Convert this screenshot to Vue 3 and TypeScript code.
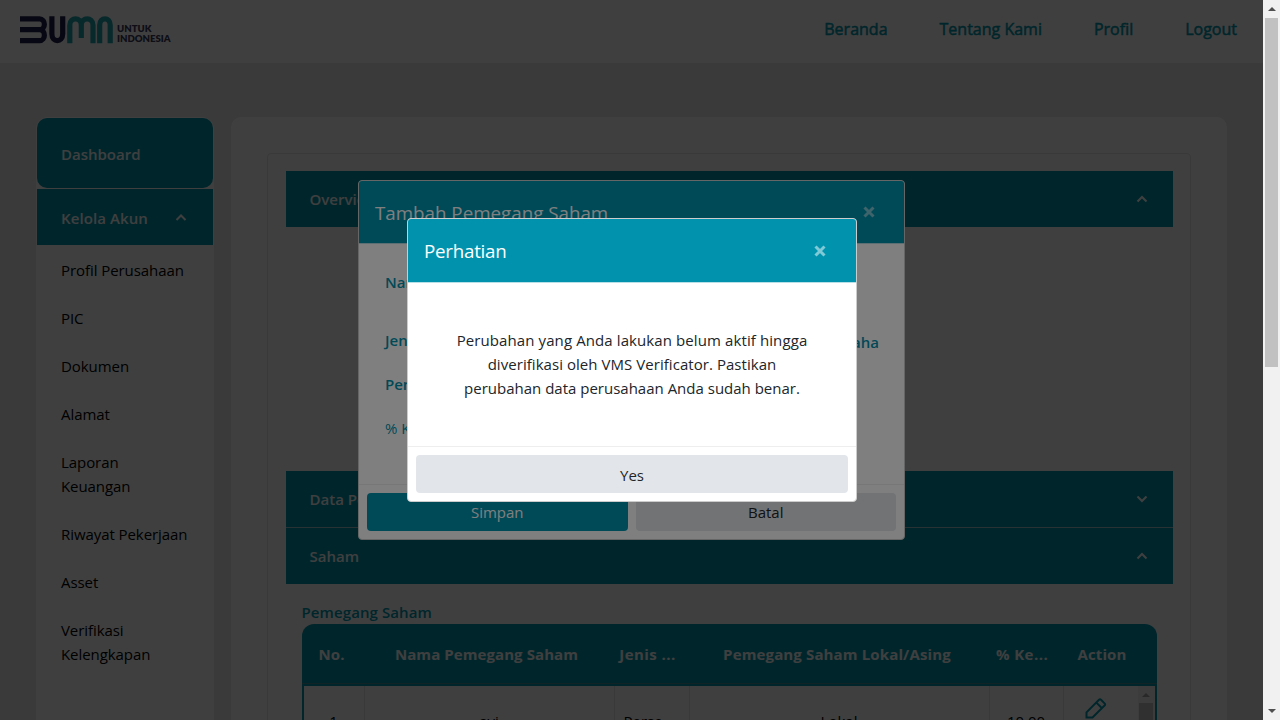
<script setup lang="ts">
interface Column {
  key: string
  label: string
  value: string
}

const navLinks: string[] = ['Beranda', 'Tentang Kami', 'Profil', 'Logout']

const menuItems: string[] = [
  'Profil Perusahaan',
  'PIC',
  'Dokumen',
  'Alamat',
  'Laporan\nKeuangan',
  'Riwayat Pekerjaan',
  'Asset',
  'Verifikasi\nKelengkapan',
]

const columns: Column[] = [
  { key: 'no', label: 'No.', value: '1' },
  { key: 'name', label: 'Nama Pemegang Saham', value: 'avi' },
  { key: 'type', label: 'Jenis ...', value: 'Perse...' },
  { key: 'origin', label: 'Pemegang Saham Lokal/Asing', value: 'Lokal' },
  { key: 'share', label: '% Ke...', value: '10.00' },
  { key: 'action', label: 'Action', value: '' },
]
</script>

<template>
  <div class="window">
    <div class="page">
      <header class="topbar">
        <div class="logo">
          <svg class="mark" width="94" height="28" viewBox="0 0 94 28" fill="none">
            <g stroke="#1b1c4b" stroke-width="5.2">
              <path d="M0 2.800H19.500C26 2.800 26 13.700 19.500 13.700H0M19.500 13.700C26 13.700 26 24.600 19.500 24.600H0" />
              <path d="M31.900 .2V18C31.900 26.800 42.700 26.800 42.700 18V.2" />
            </g>
            <g stroke="#21a5ac" stroke-width="5.2">
              <path d="M49.800 27.200V9C49.800 .8 61.300 .8 61.300 9V22M61.300 9C61.300 .8 73 .8 73 9V27.200" />
              <path d="M79.700 27.200V9C79.700 .8 90.200 .8 90.200 9V27.200" />
            </g>
          </svg>
          <div class="logo-text"><span>UNTUK</span><span>INDONESIA</span></div>
        </div>
        <nav class="nav">
          <a v-for="link in navLinks" :key="link">{{ link }}</a>
        </nav>
      </header>

      <div class="content">
        <aside class="sidebar">
          <div class="side-head dashboard">Dashboard</div>
          <div class="side-head account">
            <span>Kelola Akun</span>
            <svg width="12" height="8" viewBox="0 0 12 8"><path d="M1.500 6L6 1.500L10.500 6" /></svg>
          </div>
          <ul class="menu">
            <li v-for="item in menuItems" :key="item">{{ item }}</li>
          </ul>
        </aside>

        <main class="panel">
          <div class="card">
            <div class="bar">
              <span>Overview</span>
              <svg width="12" height="8" viewBox="0 0 12 8"><path d="M1.500 6.500L6 2L10.500 6.500" /></svg>
            </div>
            <div class="overview-body"></div>
            <div class="bar">
              <span>Data Perusahaan</span>
              <svg width="12" height="8" viewBox="0 0 12 8"><path d="M1.500 1.500L6 6L10.500 1.500" /></svg>
            </div>
            <div class="bar joined">
              <span>Saham</span>
              <svg width="12" height="8" viewBox="0 0 12 8"><path d="M1.500 6.500L6 2L10.500 6.500" /></svg>
            </div>
            <section class="shares">
              <h3>Pemegang Saham</h3>
              <div class="grid-head">
                <div v-for="col in columns" :key="col.key" :class="col.key">{{ col.label }}</div>
              </div>
              <div class="grid-body">
                <div class="grid-row">
                  <div v-for="col in columns" :key="col.key" class="cell" :class="'cell-' + col.key">
                    <svg v-if="col.key === 'action'" class="pencil" width="22" height="22" viewBox="0 0 22 22">
                      <path d="M1.500 20.500V15.300L14 2.800Q15 1.800 16 2.800L19.800 6.600Q20.600 7.400 19.800 8.200L7.500 20.500ZM11.400 5.600L17 11.200" />
                    </svg>
                    <span v-else>{{ col.value }}</span>
                  </div>
                </div>
                <div class="inner-scroll">
                  <i class="arrow-up"></i>
                  <i class="inner-thumb"></i>
                </div>
              </div>
            </section>
          </div>
        </main>
      </div>

      <div class="backdrop">
        <div class="modal form-modal">
          <div class="modal-head">
            <h2>Tambah Pemegang Saham</h2>
            <svg class="close" width="12" height="12" viewBox="0 0 12 12"><path d="M1.500 1.500L10.500 10.500M10.500 1.500L1.500 10.500" /></svg>
          </div>
          <div class="form-body">
            <div class="field first"><b>Nama</b></div>
            <div class="field"><b>Jenis</b><b class="option">Badan Usaha</b></div>
            <div class="field"><b>Pemegang Saham</b></div>
            <div class="field"><b class="light">% Kepemilikan</b></div>
          </div>
          <div class="modal-foot">
            <button class="primary">Simpan</button>
            <button>Batal</button>
          </div>
        </div>
      </div>

      <div class="backdrop">
        <div class="modal notice">
          <div class="modal-head">
            <h2>Perhatian</h2>
            <svg class="close" width="12" height="12" viewBox="0 0 12 12"><path d="M1.500 1.500L10.500 10.500M10.500 1.500L1.500 10.500" /></svg>
          </div>
          <p class="notice-body">
            <span class="wide">Perubahan yang Anda lakukan belum aktif hingga</span><br />
            <span class="middle">diverifikasi oleh VMS Verificator. Pastikan</span><br />
            <span>perubahan data perusahaan Anda sudah benar.</span>
          </p>
          <div class="modal-foot">
            <button>Yes</button>
          </div>
        </div>
      </div>
    </div>

    <div class="scrollbar">
      <i class="arrow-up"></i>
      <i class="thumb"></i>
      <i class="arrow-down"></i>
    </div>
  </div>
</template>

<style>
html,
body {
  margin: 0;
  overflow: hidden;
}
</style>

<style scoped>
* {
  box-sizing: border-box;
}
.window {
  display: flex;
  width: 1280px;
  height: 720px;
  overflow: hidden;
  font: 15px/24px "Open Sans", "Noto Sans", sans-serif;
  color: #000;
}
.page {
  position: relative;
  width: 1263px;
  height: 720px;
  overflow: hidden;
  background: #e8e8e8;
}
.topbar {
  display: flex;
  justify-content: space-between;
  height: 63px;
  padding: 0 26px 0 20px;
  background: #fff;
}
.logo {
  display: flex;
  padding-top: 16px;
  gap: 3px;
}
.logo-text {
  display: flex;
  flex-direction: column;
  padding-top: 8px;
  font: 800 9.6px/10px Lato, sans-serif;
  color: #3a3a5c;
}
.nav {
  display: flex;
  gap: 52px;
  padding-top: 17px;
  font-size: 16px;
  color: #0097ad;
  -webkit-text-stroke: 0.5px #0097ad;
}
.content {
  display: flex;
  gap: 17px;
  align-items: flex-start;
  padding: 54px 36px 0;
}
.sidebar {
  width: 178px;
  height: 640px;
  padding: 1px;
  border-radius: 12px 12px 0 0;
  background: #fff;
}
.side-head {
  display: flex;
  align-items: center;
  justify-content: space-between;
  padding: 2px 26px 0 24px;
  background: #0098b0;
  color: #fff;
  font-weight: 600;
}
.dashboard {
  height: 70px;
  border-radius: 10px;
}
.account {
  height: 56px;
  margin-top: 1px;
  letter-spacing: 0.1px;
}
svg path {
  fill: none;
}
.side-head svg path,
.bar svg path {
  stroke: #fff;
  stroke-width: 2;
}
.menu {
  margin: 0;
  padding: 1px 20px 0 24px;
  list-style: none;
  white-space: pre;
  letter-spacing: -0.07px;
}
.menu li {
  padding: 12px 0;
}
.panel {
  flex: 1;
  height: 640px;
  padding: 36px;
  border-radius: 10px;
  background: #fff;
}
.card {
  height: 640px;
  padding: 17px 17px 17px 17.5px;
  border: 1px solid #e6e6e6;
  border-radius: 4px;
}
.bar {
  display: flex;
  align-items: center;
  justify-content: space-between;
  height: 56px;
  padding: 0 25.5px 0 24px;
  background: #0098b0;
  color: #fff;
  font-weight: 600;
}
.overview-body {
  height: 244px;
}
.joined {
  height: 57px;
  border-top: 1px solid #a0c8d0;
}
.shares {
  padding: 16px 16.5px 0 16px;
}
.shares h3 {
  margin: 0;
  color: #0098b0;
  font-size: 15px;
  font-weight: 600;
  letter-spacing: 0.1px;
}
.grid-head,
.grid-row {
  display: grid;
  grid-template-columns: 62px 250px 75px 300px 74px 74px;
}
.grid-head {
  height: 60px;
  align-items: center;
  border-bottom: 1px solid #4a8f9b;
  border-radius: 12px 12px 0 0;
  background: #0098b0;
  color: #fff;
  font-weight: 700;
  text-align: center;
  white-space: nowrap;
  letter-spacing: 0.08px;
}
.grid-head .no {
  padding-right: 2px;
}
.grid-head .name {
  padding-right: 4px;
}
.grid-head .type {
  padding-right: 7px;
  letter-spacing: 0.45px;
}
.grid-head .origin {
  padding-right: 3px;
  letter-spacing: 0.14px;
}
.grid-head .share {
  padding-right: 7px;
  letter-spacing: 0.45px;
}
.grid-head .action {
  padding-left: 5px;
}
.grid-body {
  display: flex;
  height: 80px;
  border: 2px solid #0098b0;
}
.grid-row {
  width: 834px;
  grid-template-columns: 61px 250px 75px 300px 74px 74px;
}
.cell {
  padding: 23px 0 0;
  border-right: 1px solid #e4e4e4;
  text-align: center;
}
.cell-type {
  padding-right: 5px;
}
.cell:last-child {
  border-right: 0;
  padding: 11px 9px 0 0;
}
.pencil {
  stroke: #0098b0;
  stroke-width: 2;
}
.inner-scroll {
  display: flex;
  flex: 1;
  flex-direction: column;
  align-items: center;
  background: #f1f1f1;
}
.inner-thumb {
  width: 14px;
  height: 80px;
  margin-top: 6px;
  background: #c1c1c1;
}
.inner-scroll .arrow-up {
  border-bottom-color: #a0a0a0;
}
.backdrop {
  position: absolute;
  inset: 0;
  background: rgba(0, 0, 0, 0.5);
}
.modal {
  position: absolute;
  display: flex;
  flex-direction: column;
  overflow: hidden;
  border: 1px solid #ccc;
  border-radius: 4px;
  background: #fff;
}
.form-modal {
  left: 358px;
  top: 180px;
  width: 547px;
  height: 360px;
}
.notice {
  left: 407px;
  top: 218px;
  width: 450px;
  height: 284px;
}
.modal-head {
  display: flex;
  align-items: center;
  justify-content: space-between;
  height: 64px;
  padding: 1px 30px 0 16px;
  border-bottom: 1px solid #b9dfe6;
  background: #0193ae;
  color: #fff;
}
.modal-head h2 {
  margin: 0;
  font-size: 18.75px;
  font-weight: 500;
}
.notice h2 {
  letter-spacing: -0.25px;
}
.form-modal .modal-head {
  height: 63px;
  padding-right: 29px;
}
.form-modal .close {
  margin-bottom: 2px;
}
.close {
  stroke: #fff;
  stroke-width: 3;
  opacity: 0.5;
}
.notice-body {
  flex: 1;
  margin: 0;
  padding-top: 45px;
  text-align: center;
  white-space: nowrap;
  color: #212529;
}
.notice-body .wide {
  letter-spacing: 0.1px;
}
.notice-body .middle {
  letter-spacing: 0.05px;
}
.modal-foot {
  display: flex;
  gap: 8px;
  height: 55px;
  padding: 8px;
  border-top: 1px solid #eee;
}
button {
  flex: 1;
  height: 38px;
  padding: 1px 0 0;
  border: 0;
  border-radius: 4px;
  background: #e2e6ea;
  color: #212529;
  font: inherit;
}
.form-modal button {
  padding: 0 0 1px;
}
.primary {
  background: #0193ae;
  color: #fff;
}
.form-modal .primary {
  color: #fff;
}
.form-body {
  display: flex;
  flex: 1;
  flex-direction: column;
  gap: 20px;
  padding: 26px 25px 0 26px;
  color: #0193ae;
}
.field {
  display: flex;
  justify-content: space-between;
  height: 24px;
}
.field.first {
  margin-bottom: 14px;
}
.field b {
  font-weight: 600;
}
.field .light {
  font-weight: 500;
}
.field .option {
  padding-top: 2px;
}
.scrollbar {
  display: flex;
  flex-direction: column;
  align-items: center;
  width: 17px;
  height: 720px;
  background: #f1f1f1;
}
.thumb {
  width: 13px;
  height: 349px;
  margin-top: 7px;
  background: #c1c1c1;
}
.arrow-up {
  width: 0;
  height: 0;
  margin-top: 7px;
  border: 4px solid transparent;
  border-top: 0;
  border-bottom-color: #505050;
}
.arrow-down {
  width: 0;
  height: 0;
  margin: auto 0 7px;
  border: 4px solid transparent;
  border-bottom: 0;
  border-top-color: #505050;
}
</style>
